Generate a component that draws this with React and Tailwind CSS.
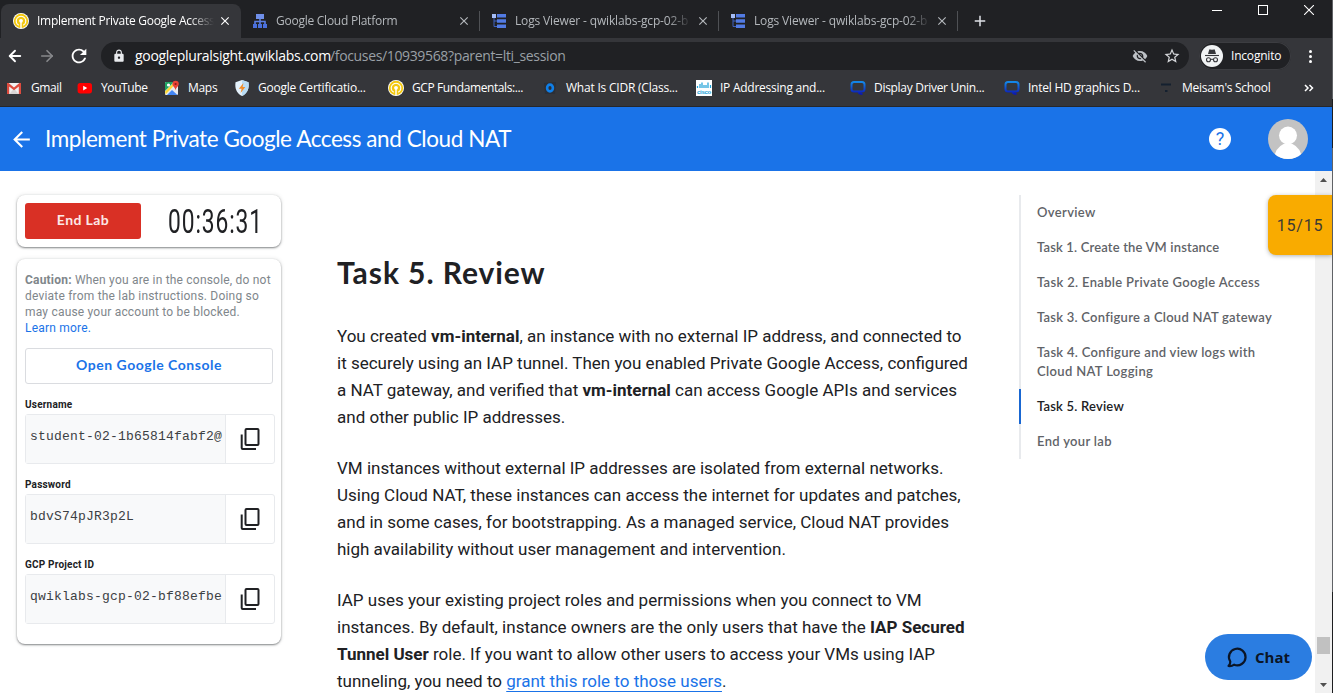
import React from "react";
import { ArrowLeft, ArrowRight } from "lucide-react";
import { MdRefresh, MdLock, MdStarBorder, MdArrowBack, MdClose, MdAdd, MdVisibilityOff } from "react-icons/md";

const QwikIcon = () => (
  <svg className="size-4 shrink-0" viewBox="0 0 16 16">
    <circle cx="8" cy="8" r="8" fill="#fff" />
    <circle cx="8" cy="8" r="7.2" fill="#f3c80f" />
    <path d="M5.800 12.300a4.800 4.800 0 1 1 4.400 0" fill="none" stroke="#fff" strokeWidth="1.100" />
    <path d="M8 8v7.500" stroke="#fff" strokeWidth="1.400" />
    <circle cx="8" cy="7.800" r="1.900" fill="#fff" />
  </svg>
);

const NetIcon = () => (
  <svg className="size-4 shrink-0" viewBox="0 0 16 16">
    <path d="M4 1h8v5H4z" fill="#6f8fe9" />
    <path d="M8 6v5M3 11V8.500h10V11" fill="none" stroke="#5b7fe3" strokeWidth="1.600" />
    <path d="M1 11h4v4H1zM6 11h4v4H6zM11 11h4v4h-4z" fill="#4a70dd" />
  </svg>
);

const LogsIcon = () => (
  <svg className="size-4 shrink-0" viewBox="0 0 16 16">
    <path d="M1 1h4v4H1z" fill="#a5bdf7" />
    <path d="M6 1h9v3.400H6zM6 6.300h9v3.400H6zM6 11.600h9V15H6z" fill="#527be4" />
    <path d="M3 5v8.500h3M3 8h3" fill="none" stroke="#3e62c0" strokeWidth="1" />
  </svg>
);

const GmailIcon = () => (
  <svg className="size-4 shrink-0" viewBox="0 0 16 16">
    <path d="M0 3h14v11H0z" fill="#f1f1f1" />
    <path d="M2.400 14 7 8.600l4.600 5.400z" fill="#d9d5d5" />
    <path d="M0 3h1.600L7 7.400 12.400 3H14v11h-2.200V6.400L7 10.200 2.200 6.400V14H0z" fill="#dd4b3e" />
  </svg>
);

const YouTubeIcon = () => (
  <svg className="size-4 shrink-0" viewBox="0 0 16 16">
    <rect x="0.600" y="3" width="14.400" height="10.400" rx="2.600" fill="#f00" />
    <path d="M6.200 5.800v4.600l4-2.300z" fill="#fff" />
  </svg>
);

const MapsIcon = () => (
  <svg className="size-4 shrink-0" viewBox="0 0 16 16">
    <rect x="1" y="2" width="13" height="13" rx="1" fill="#e8eaed" />
    <path d="M1 3a1 1 0 0 1 1-1h8L1 11z" fill="#1fa463" />
    <path d="M1 11.500 10 2.600l1.400 1.400L1.600 14.600z" fill="#fdd835" />
    <path d="m3 15 5-5 5.500 5z" fill="#4285f4" />
    <circle cx="4.500" cy="5" r="1.600" fill="#fff" />
    <path d="M8.400 4a3.200 3.200 0 1 1 6.400 0c0 2.400-2.600 3.200-3.200 6.200C11 7.200 8.400 6.400 8.400 4z" fill="#ea4335" />
    <circle cx="11.600" cy="4" r="1.100" fill="#8c1d18" />
  </svg>
);

const ShieldIcon = () => (
  <svg className="size-4 shrink-0" viewBox="0 0 16 16">
    <path d="M8 0l6.500 2.200c.8 6-.8 11-6.500 13.800C2.300 13.200.7 8.200 1.500 2.200z" fill="#e4f1fb" />
    <path d="M8 0l6.500 2.200c.8 6-.8 11-6.500 13.800z" fill="#b9dcf3" />
    <path d="M9.500 3 4.800 8.800h2.800L6.600 13l4.700-6H8.600z" fill="#f28c28" />
  </svg>
);

const CidrIcon = () => (
  <svg className="size-4 shrink-0" viewBox="0 0 16 16">
    <path d="M2 3l12-1-1 12-10 0z" fill="#2c2f36" />
    <ellipse cx="8" cy="8" rx="2.900" ry="3.400" fill="none" stroke="#0f7fe8" strokeWidth="2.600" />
  </svg>
);

const CiscoIcon = () => (
  <span className="flex size-4 shrink-0 flex-col items-center justify-end bg-white font-['Liberation_Sans'] text-[#1ba0d7]">
    <svg className="h-2 w-4" viewBox="0 0 16 8">
      <path d="M1.500 5v2M4 3v4M6 1.500V7M8 4v3M10 4v3M12 1.500V7M14.500 4v3" stroke="#1ba0d7" strokeWidth="1.200" />
    </svg>
    <span className="text-[6px] font-bold leading-[7px] tracking-[-0.3px]">cisco</span>
  </span>
);

const IntelIcon = () => (
  <svg className="size-4 shrink-0" viewBox="0 0 16 16" fill="none">
    <defs>
      <linearGradient id="intel" x1="0" y1="0" x2="0" y2="1">
        <stop offset="0" stopColor="#1488e8" />
        <stop offset="1" stopColor="#0b18b4" />
      </linearGradient>
    </defs>
    <path d="M4 2h8q2.500 0 2.500 2.500v4.500q0 2.500-2.500 2.500H4Q1.500 11.500 1.500 9V4.500Q1.500 2 4 2zM8.500 12.500q1 1.500 4 1.500" stroke="url(#intel)" strokeWidth="2" />
  </svg>
);

const SchoolIcon = () => (
  <svg className="size-4 shrink-0" viewBox="0 0 16 16">
    <path d="M3 3.500h10v2H3zM7 10h2.500v2H7z" fill="#14202f" />
  </svg>
);

const IncognitoIcon = () => (
  <svg className="size-[22px]" viewBox="0 0 22 22">
    <circle cx="11" cy="11" r="11" fill="#f1f3f4" />
    <path d="M7 9l1.200-4.200q.2-.6.900-.4l1.900.4 1.900-.4q.7-.2.900.4L15 9z" fill="#35363a" />
    <path d="M4 10.500h14" stroke="#35363a" strokeWidth="1.100" />
    <g fill="none" stroke="#35363a" strokeWidth="1.100">
      <circle cx="7.500" cy="14.800" r="2" />
      <circle cx="14.500" cy="14.800" r="2" />
      <path d="M9.500 14.600q1.500-.8 3 0" />
    </g>
  </svg>
);

const CopyIcon = () => (
  <svg className="mr-px size-6" viewBox="0 0 24 24" fill="none" stroke="#202124" strokeWidth="2">
    <rect x="7.500" y="2" width="13" height="16" rx="1" />
    <path d="M3.700 7.500V21q0 1 1 1H18" />
  </svg>
);

const tabs = [
  { title: "Implement Private Google Access", Icon: QwikIcon, active: true, track: "tracking-[-0.27px]" },
  { title: "Google Cloud Platform", Icon: NetIcon, track: "tracking-[-0.25px]" },
  { title: "Logs Viewer - qwiklabs-gcp-02-b", Icon: LogsIcon, sep: true, track: "tracking-[-0.15px]" },
  { title: "Logs Viewer - qwiklabs-gcp-02-b", Icon: LogsIcon, sep: true, track: "tracking-[-0.15px]" },
];

function TabStrip() {
  return (
    <div className="flex h-[38px] bg-[#202124] pl-px">
      {tabs.map(({ title, Icon, active, sep, track }, i) => (
        <div key={i} className="flex w-[239px] shrink-0 items-end">
          <div
            className={
              active
                ? "relative mr-[-1px] flex h-[34px] w-[240px] shrink-0 items-center rounded-t-lg bg-[#35363a] pl-3 text-white"
                : "relative flex h-[34px] w-[239px] items-center pl-3 text-[#b4b8bc]"
            }
          >
            {sep && <span className="absolute left-0 top-[7px] h-5 w-px bg-[#4f5155]" />}
            <Icon />
            <span className="ml-2 w-[177px] overflow-hidden whitespace-nowrap [mask-image:linear-gradient(to_right,#000_86%,transparent)]">
              <span className={track}>{title}</span>
            </span>
            <MdClose className="ml-[4px] size-[14px] shrink-0" />
          </div>
        </div>
      ))}
      <div className="flex w-[46px] items-center pt-1">
        <span className="h-5 w-px bg-[#4f5155]" />
        <MdAdd className="ml-[13px] size-[18px] text-[#dee1e6]" />
      </div>
      <div className="ml-auto mr-px flex h-5 items-center text-white">
        <span className="flex w-[46px] justify-center"><span className="h-px w-[10px] bg-white" /></span>
        <span className="flex w-[46px] justify-center"><span className="size-[10px] border border-white" /></span>
        <span className="flex w-[46px] justify-center">
          <svg className="size-[10px]" viewBox="0 0 10 10"><path d="M0 0l10 10M10 0L0 10" stroke="#fff" strokeWidth="1.100" /></svg>
        </span>
      </div>
    </div>
  );
}

function Toolbar() {
  return (
    <div className="flex h-9 items-center bg-[#35363a] pl-[6px]">
      <ArrowLeft className="size-[18px] text-white" strokeWidth={2.500} />
      <ArrowRight className="ml-[14px] size-[18px] text-[#88898c]" strokeWidth={2.200} />
      <MdRefresh className="ml-[12px] size-[22px] text-white" />
      <div className="ml-[11px] flex h-7 w-[1088px] items-center rounded-full bg-[#202124] pl-[11px] text-sm">
        <MdLock className="size-[14px] text-[#e8eaed]" />
        <span className="ml-[9px] w-[195px] whitespace-nowrap tracking-[-0.3px] text-white">googlepluralsight.qwiklabs.com</span>
        <span className="whitespace-nowrap tracking-[-0.35px] text-[#9aa0a6]">/focuses/10939568?parent=lti_session</span>
        <MdVisibilityOff className="ml-auto size-4 text-[#bdc1c6]" />
        <MdStarBorder className="ml-[15px] mr-[8px] size-[18px] text-[#d5d7da]" />
      </div>
      <div className="ml-[10px] flex h-7 w-[92px] items-center rounded-full bg-[#202124] pl-[2px] text-xs text-white ring-1 ring-inset ring-[#3c3d41]">
        <IncognitoIcon />
        <span className="ml-[8px] tracking-[-0.2px]">Incognito</span>
      </div>
      <div className="ml-[18px] flex flex-col gap-[2px]">
        <span className="size-[3px] rounded-full bg-white" />
        <span className="size-[3px] rounded-full bg-white" />
        <span className="size-[3px] rounded-full bg-white" />
      </div>
    </div>
  );
}

const bookmarks = [
  ["Gmail", GmailIcon, "w-[70px]", "tracking-[-0.4px]"],
  ["YouTube", YouTubeIcon, "w-[87px]", "tracking-[-0.4px]"],
  ["Maps", MapsIcon, "w-[70px]", "tracking-[-0.3px]"],
  ["Google Certificatio...", ShieldIcon, "w-[154px]", "tracking-[-0.22px]"],
  ["GCP Fundamentals:...", QwikIcon, "w-[154px]", "tracking-[-0.4px]"],
  ["What Is CIDR (Class...", CidrIcon, "w-[154px]", "tracking-[-0.22px]"],
  ["IP Addressing and...", CiscoIcon, "w-[154px]", "tracking-[-0.25px]"],
  ["Display Driver Unin...", IntelIcon, "w-[154px]", "tracking-[-0.3px]"],
  ["Intel HD graphics D...", IntelIcon, "w-[154px]", "tracking-[-0.24px]"],
  ["Meisam's School", SchoolIcon, "w-[140px]", "tracking-[-0.28px]"],
];

function Bookmarks() {
  return (
    <div className="flex h-[33px] items-center border-b border-[#26272a] bg-[#35363a] pb-[4px] pl-[7px] text-white">
      {bookmarks.map(([name, Icon, width, track]) => (
        <div key={name} className={`flex shrink-0 items-center gap-2 whitespace-nowrap ${width}`}>
          <Icon />
          <span className={track}>{name}</span>
        </div>
      ))}
      <svg className="ml-[6px] h-2 w-[10px]" viewBox="0 0 10 8"><path d="M1 1l3 3-3 3M5.500 1l3 3-3 3" fill="none" stroke="#fff" strokeWidth="1.500" /></svg>
    </div>
  );
}

function LabHeader() {
  return (
    <header className="flex h-16 items-center bg-[#1a73e8] pl-[9px] text-white">
      <MdArrowBack className="size-[25px]" />
      <h1 className="ml-[11px] whitespace-nowrap pb-[1px] font-['Lato',sans-serif] text-[22.500px] leading-7 tracking-[-0.42px]">Implement Private Google Access and Cloud NAT</h1>
      <div className="ml-auto mr-[37px] flex size-[22px] items-center justify-center rounded-full bg-white font-['Roboto'] text-[18px] leading-none text-[#1a73e8]">?</div>
      <svg className="mr-[25px] size-10" viewBox="0 0 40 40">
        <defs><clipPath id="av"><circle cx="20" cy="20" r="20" /></clipPath></defs>
        <g clipPath="url(#av)">
          <path d="M0 0h40v40H0z" fill="#c3c3c3" />
          <circle cx="20" cy="16.500" r="9" fill="#fff" />
          <path d="M6 40q1-11 9.500-15h9Q33 29 34 40z" fill="#fff" />
        </g>
      </svg>
    </header>
  );
}

const fields = [
  ["Username", "student-02-1b65814fabf2@"],
  ["Password", "bdvS74pJR3p2L"],
  ["GCP Project ID", "qwiklabs-gcp-02-bf88efbe"],
];

function LabPanel() {
  return (
    <aside className="flex w-[264px] shrink-0 flex-col gap-3 font-['Roboto',sans-serif]">
      <div className="flex h-[52px] items-center rounded-lg bg-white pl-2 shadow-[0_1px_2px_rgba(60,64,67,0.6),0_0_4px_rgba(60,64,67,0.15)]">
        <button className="h-9 w-[116px] rounded-[3px] bg-[#d93025] pb-px font-['Lato',sans-serif] text-[14px] font-bold tracking-[0.4px] text-[#fce8e6]">End Lab</button>
        <div className="ml-[27px] w-[94px] pt-[2px]">
          <div className="w-[94px] origin-left scale-x-[0.69] whitespace-nowrap text-[33px] leading-[36px] tracking-[1.300px] text-[#202124]">00:36:31</div>
        </div>
      </div>
      <div className="h-[385px] rounded-lg bg-white px-2 pt-[13px] text-[#202124] shadow-[0_1px_2px_rgba(60,64,67,0.6),0_0_4px_rgba(60,64,67,0.15)]">
        <p className="whitespace-nowrap text-xs leading-4 tracking-[0.2px] text-[#80868b]">
          <b>Caution:</b> When you are in the console, do not<br />
          deviate from the lab instructions. Doing so<br />
          may cause your account to be blocked.<br />
          <a className="text-[#1a73e8]">Learn more.</a>
        </p>
        <button className="mt-[12px] h-9 w-full rounded-[3px] border border-[#dadce0] pb-px font-['Lato',sans-serif] text-[14px] font-bold tracking-[0.53px] text-[#1a73e8]">Open Google Console</button>
        <div className="mt-[14px] flex flex-col gap-[14px]">
          {fields.map(([label, value]) => (
            <div key={label}>
              <div className="h-4 text-[10px] font-bold leading-[14px] tracking-[0.2px]">{label}</div>
              <div className="flex h-[50px] w-[250px] rounded-[3px] border border-[#e8eaed]">
                <div className="w-[200px] overflow-hidden whitespace-nowrap border-r border-[#e8eaed] bg-[#f8f9fa] pl-1 pt-[12px] font-['Liberation_Mono',monospace] text-[13px] leading-5 tracking-[0.2px] text-[#3c4043]">{value}</div>
                <div className="flex flex-1 items-center justify-center"><CopyIcon /></div>
              </div>
            </div>
          ))}
        </div>
      </div>
    </aside>
  );
}

function Article() {
  return (
    <main className="ml-[56px] w-[682px] shrink-0 whitespace-nowrap font-['Roboto',sans-serif] text-[17px] leading-[27px] text-[#202124]">
      <h2 className="mt-[59px] font-['Lato',sans-serif] text-[30px] font-bold leading-9 tracking-[0.93px]">Task 5. Review</h2>
      <p className="mt-[33px]">
        <span className="block">You created <b>vm-internal</b>, an instance with no external IP address, and connected to</span>
        <span className="block">it securely using an IAP tunnel. Then you enabled Private Google Access, configured</span>
        <span className="block">a NAT gateway, and verified that <b>vm-internal</b> can access Google APIs and services</span>
        <span className="block">and other public IP addresses.</span>
      </p>
      <p className="mt-6">
        <span className="block">VM instances without external IP addresses are isolated from external networks.</span>
        <span className="block">Using Cloud NAT, these instances can access the internet for updates and patches,</span>
        <span className="block">and in some cases, for bootstrapping. As a managed service, Cloud NAT provides</span>
        <span className="block">high availability without user management and intervention.</span>
      </p>
      <p className="mt-6">
        <span className="block">IAP uses your existing project roles and permissions when you connect to VM</span>
        <span className="block">instances. By default, instance owners are the only users that have the <b>IAP Secured</b></span>
        <span className="block"><b>Tunnel User</b> role. If you want to allow other users to access your VMs using IAP</span>
        <span className="block">tunneling, you need to <a className="text-[#1a73e8] underline decoration-1 underline-offset-4">grant this role to those users</a>.</span>
      </p>
    </main>
  );
}

const outline = [
  [["Overview", "tracking-[0.35px]"]],
  [["Task 1. Create the VM instance", "tracking-[0.16px]"]],
  [["Task 2. Enable Private Google Access", "tracking-[0.33px]"]],
  [["Task 3. Configure a Cloud NAT gateway", "tracking-[0.25px]"]],
  [["Task 4. Configure and view logs with", "tracking-[0.29px]"], ["Cloud NAT Logging", "tracking-[0.35px]"]],
  [["Task 5. Review", "tracking-[0.2px]"]],
  [["End your lab", "tracking-[0.32px]"]],
];

function Outline() {
  return (
    <nav className="h-[264px] w-[249px] shrink-0 whitespace-nowrap font-['Lato',sans-serif] text-[13px] font-semibold leading-[19px] text-[#5f6368]">
      {outline.map((lines, i) => (
        <div key={i} className={i === 5 ? "border-l-2 border-[#1967d2] py-2 pl-4 text-[#202124]" : "border-l-2 border-[#e8eaed] py-2 pl-4"}>
          {lines.map(([text, track]) => <div key={text} className={track}>{text}</div>)}
        </div>
      ))}
    </nav>
  );
}

export default function App() {
  return (
    <div className="relative h-[693px] w-[1333px] overflow-hidden bg-white font-['Open_Sans',sans-serif] text-xs">
      <TabStrip />
      <Toolbar />
      <Bookmarks />
      <LabHeader />
      <div className="flex h-[522px] overflow-hidden">
        <div className="flex w-[1315px] pl-[17px] pt-6">
          <LabPanel />
          <Article />
          <Outline />
        </div>
        <div className="flex w-[17px] flex-col items-center bg-[#f1f1f1]">
          <svg className="mt-[7px] h-[4px] w-[7px]" viewBox="0 0 7 4"><path d="M3.500 0L7 4H0z" fill="#505050" /></svg>
          <div className="mt-[455px] h-[17px] w-[13px] bg-[#c1c1c1]" />
          <svg className="mt-auto mb-[6px] h-[4px] w-[7px]" viewBox="0 0 7 4"><path d="M3.500 4L7 0H0z" fill="#505050" /></svg>
        </div>
      </div>
      <div className="absolute left-[1332px] top-0 flex h-[693px] w-px flex-col bg-[#606266]">
        <span className="mt-[99px] h-[49px] bg-[#1d1e20]" />
        <span className="mt-auto h-[101px] bg-[#1d1e20]" />
      </div>
      <div className="absolute left-[1268px] top-[195px] flex h-[60px] w-16 items-center justify-center rounded-l-lg bg-[#f9ab00] pt-px font-['Roboto',sans-serif] text-base tracking-[0.8px] text-[#3c3a33] shadow-[0_1px_4px_rgba(60,64,67,0.4)]">15/15</div>
      <button className="absolute left-[1205px] top-[634px] flex h-[46px] w-[107px] items-center rounded-full bg-[#2b7de1] pl-[21px] text-[15px] font-bold text-[#0b1526]">
        <svg className="size-[22px]" viewBox="0 0 22 22" fill="none" stroke="#0b1526" strokeWidth="2.200" strokeLinejoin="round">
          <path d="M4.300 15.500A8.300 8.300 0 1 1 8.200 18.700Q5.500 20.500 2.500 20 4.500 18 4.300 15.500z" />
        </svg>
        <span className="ml-[7px]">Chat</span>
      </button>
    </div>
  );
}
